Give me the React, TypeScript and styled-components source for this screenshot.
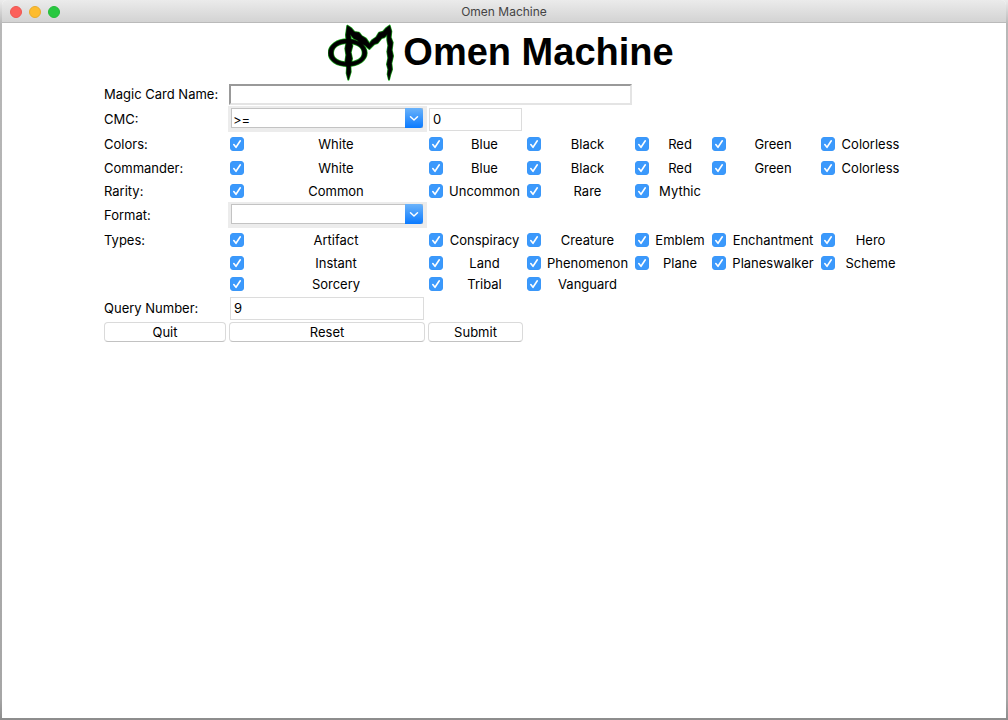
import React from "react";
import styled, { createGlobalStyle } from "styled-components";

const GlobalStyle = createGlobalStyle`
  * { box-sizing: border-box; }
  body {
    margin: 0;
    background: #b4b4b4;
    color: #000;
    font: 13px/16px Inter, "Liberation Sans", sans-serif;
  }
`;

const Desktop = styled.div`
  display: flex;
  min-height: 100vh;
  padding: 0 2px 2px;
  background: linear-gradient(#ececec, #b8b8b8 24px, #a6a6a6 97%, #8c8c8c);
`;

const Window = styled.div`
  flex: 1;
  display: flex;
  flex-direction: column;
  min-width: 0;
  background: #fff;
  border-radius: 5px 5px 0 0;
`;

const TitleBar = styled.header`
  position: relative;
  display: flex;
  align-items: center;
  justify-content: center;
  height: 23px;
  padding-top: 2px;
  border-bottom: 1px solid #bababa;
  border-radius: 5px 5px 0 0;
  background: linear-gradient(#ebebeb, #d3d3d3);
  color: #444;
  font-size: 12px;
`;

const Lights = styled.div`
  position: absolute;
  top: 6px;
  left: 8px;
  display: flex;
  gap: 7px;
`;

const Light = styled.button<{ $fill: string; $edge: string }>`
  width: 12px;
  height: 12px;
  padding: 0;
  border: 1px solid ${(p) => p.$edge};
  border-radius: 50%;
  background: ${(p) => p.$fill};
`;

const Content = styled.main`
  display: flex;
  flex-direction: column;
  align-items: center;
`;

const Brand = styled.div`
  display: flex;
  align-items: center;
  gap: 7px;
  height: 59px;
  padding-right: 6px;
`;

const Title = styled.h1`
  margin: 0;
  padding-bottom: 2px;
  font: bold 38px/56px "Liberation Sans", Arial, sans-serif;
`;

const Form = styled.form`
  display: grid;
  grid-template-columns: 125px 199px 98px 108px 77px 109px 86px;
  grid-template-rows: 24px 26px 24px 23px 23px 26px 24px 21px 22px 26px 22px;
  align-items: center;
`;

const rowName = `
  grid-column: 1;
  padding-left: 1px;
`;

const FieldName = styled.label`
  ${rowName}
`;

const GroupName = styled.span`
  ${rowName}
`;

const Group = styled.div`
  display: contents;
`;

const Check = styled.label<{ $col: number }>`
  grid-column: ${(p) => p.$col};
  display: flex;
  align-items: center;
  padding: 0 2px;
`;

const CheckText = styled.span`
  flex: 1;
  padding-left: 3px;
  text-align: center;
`;

const Tick = styled.span`
  display: grid;
  flex: none;

  > * {
    grid-area: 1 / 1;
    width: 14px;
    height: 14px;
  }

  svg {
    pointer-events: none;
    visibility: hidden;
  }

  input:checked + svg {
    visibility: visible;
  }
`;

const TickInput = styled.input`
  appearance: none;
  margin: 0;
  border: 1px solid #c4c4c4;
  border-radius: 3px;
  background: #fff;

  &:checked {
    border-color: #3a97f9;
    background: #3b99fc;
  }
`;

const NameInput = styled.input`
  grid-column: 2 / 5;
  width: 403px;
  height: 21px;
  margin-left: 1px;
  padding: 0 2px;
  border: 2px solid;
  border-color: #999 #e4e4e4 #e4e4e4 #999;
  background: #fff;
  font: inherit;
`;

const Entry = styled.input`
  height: 23px;
  margin: 0 3px 0 2px;
  padding: 0 3px;
  min-width: 0;
  border: 1px solid #dcdcdc;
  background: #fff;
  font: inherit;
`;

const Combo = styled.div`
  position: relative;
  height: 26px;
  padding: 2px 4px 4px 3px;
  background: #ececec;

  svg {
    position: absolute;
    top: 2px;
    right: 4px;
    pointer-events: none;
  }
`;

const Select = styled.select`
  appearance: none;
  display: block;
  width: 100%;
  height: 20px;
  padding: 3px 20px 0 1px;
  border: 1px solid #c3c3c3;
  background: #fff;
  color: #000;
  font: inherit;
`;

const Button = styled.button<{ $col: number }>`
  grid-column: ${(p) => p.$col};
  height: 20px;
  margin: 0 2px 0 1px;
  padding: 0 0 1px;
  border: 1px solid #dadada;
  border-bottom-color: #c2c2c2;
  border-radius: 4px;
  background: #fff;
  color: #000;
  font: inherit;
  line-height: 16px;
`;

const ring =
  "M84 58C51 58 27 76 27 99S51 138 84 138S141 120 141 99S118 58 84 58ZM84 69C110 69 129 81 129 99S110 127 84 127S40 117 40 99S58 69 84 69Z";

const strokes =
  "M83 17L94 24L104 36L118 38L126 48L139 56L149 71L158 60L170 52L178 38L190 35L200 24L210 17L215 34L213 52L219 68L216 90L220 108L215 130L217 148L212 163L208 179L204 163L206 148L202 133L206 114L203 95L206 77L203 60L203 43L194 52L186 54L174 69L164 72L149 87L136 76L123 71L112 59L103 56L91 42L94 61L98 78L93 97L97 116L92 137L93 156L86 179L81 160L82 143L77 125L80 105L77 86L81 65L79 45Z";

function Logo() {
  return (
    <svg width="68" height="57" viewBox="25 12 204 171" aria-hidden="true">
      <g stroke="#27b327" strokeWidth="6" strokeLinejoin="round" fill="#27b327">
        <path fillRule="evenodd" d={ring} />
        <path d={strokes} />
      </g>
      <g stroke="#000" strokeWidth="2" strokeLinejoin="round">
        <path fillRule="evenodd" d={ring} />
        <path d={strokes} />
      </g>
    </svg>
  );
}

function ComboArrow() {
  return (
    <svg width="18" height="20" viewBox="0 0 18 20" aria-hidden="true">
      <defs>
        <linearGradient id="arrowFill" x2="0" y2="1">
          <stop offset="0" stopColor="#6bb3fa" />
          <stop offset="1" stopColor="#0a7aff" />
        </linearGradient>
      </defs>
      <path d="M0 0H15Q18 0 18 3V17Q18 20 15 20H0Z" fill="url(#arrowFill)" />
      <path d="M5.5 8.8L9 12L12.5 8.8" fill="none" stroke="#fff" strokeWidth="1.5" strokeLinecap="round" strokeLinejoin="round" />
    </svg>
  );
}

function CheckRow({ name, items }: { name?: string; items: string[] }) {
  return (
    <Group role="group" aria-label={name}>
      {name && <GroupName>{name}:</GroupName>}
      {items.map((item, i) => (
        <Check key={item} $col={i + 2}>
          <Tick>
            <TickInput type="checkbox" defaultChecked />
            <svg viewBox="0 0 14 14" aria-hidden="true">
              <path d="M3.8 7.6L6 10.3L10.3 3.8" fill="none" stroke="#fff" strokeWidth="1.6" strokeLinecap="round" strokeLinejoin="round" />
            </svg>
          </Tick>
          <CheckText>{item}</CheckText>
        </Check>
      ))}
    </Group>
  );
}

const colors = ["White", "Blue", "Black", "Red", "Green", "Colorless"];

export default function App() {
  return (
    <Desktop>
      <GlobalStyle />
      <Window>
        <TitleBar>
          <Lights>
            <Light type="button" aria-label="Close" $fill="#fc605b" $edge="#ee5651" />
            <Light type="button" aria-label="Minimize" $fill="#fdbc2f" $edge="#e8ac2c" />
            <Light type="button" aria-label="Zoom" $fill="#28c840" $edge="#25bb3a" />
          </Lights>
          Omen Machine
        </TitleBar>
        <Content>
          <Brand>
            <Logo />
            <Title>Omen Machine</Title>
          </Brand>
          <Form onSubmit={(e) => e.preventDefault()}>
            <FieldName htmlFor="card">Magic Card Name:</FieldName>
            <NameInput id="card" type="text" />

            <FieldName htmlFor="cmc-op">CMC:</FieldName>
            <Combo>
              <Select id="cmc-op" defaultValue=">=">
                <option>&gt;=</option>
                <option>=</option>
                <option>&lt;=</option>
              </Select>
              <ComboArrow />
            </Combo>
            <Entry type="text" aria-label="CMC value" defaultValue="0" />

            <CheckRow name="Colors" items={colors} />
            <CheckRow name="Commander" items={colors} />
            <CheckRow name="Rarity" items={["Common", "Uncommon", "Rare", "Mythic"]} />

            <FieldName htmlFor="format">Format:</FieldName>
            <Combo>
              <Select id="format" defaultValue="">
                <option value="" />
              </Select>
              <ComboArrow />
            </Combo>

            <CheckRow name="Types" items={["Artifact", "Conspiracy", "Creature", "Emblem", "Enchantment", "Hero"]} />
            <CheckRow items={["Instant", "Land", "Phenomenon", "Plane", "Planeswalker", "Scheme"]} />
            <CheckRow items={["Sorcery", "Tribal", "Vanguard"]} />

            <FieldName htmlFor="query">Query Number:</FieldName>
            <Entry id="query" type="text" defaultValue="9" />

            <Button type="button" $col={1}>Quit</Button>
            <Button type="reset" $col={2}>Reset</Button>
            <Button type="submit" $col={3}>Submit</Button>
          </Form>
        </Content>
      </Window>
    </Desktop>
  );
}
